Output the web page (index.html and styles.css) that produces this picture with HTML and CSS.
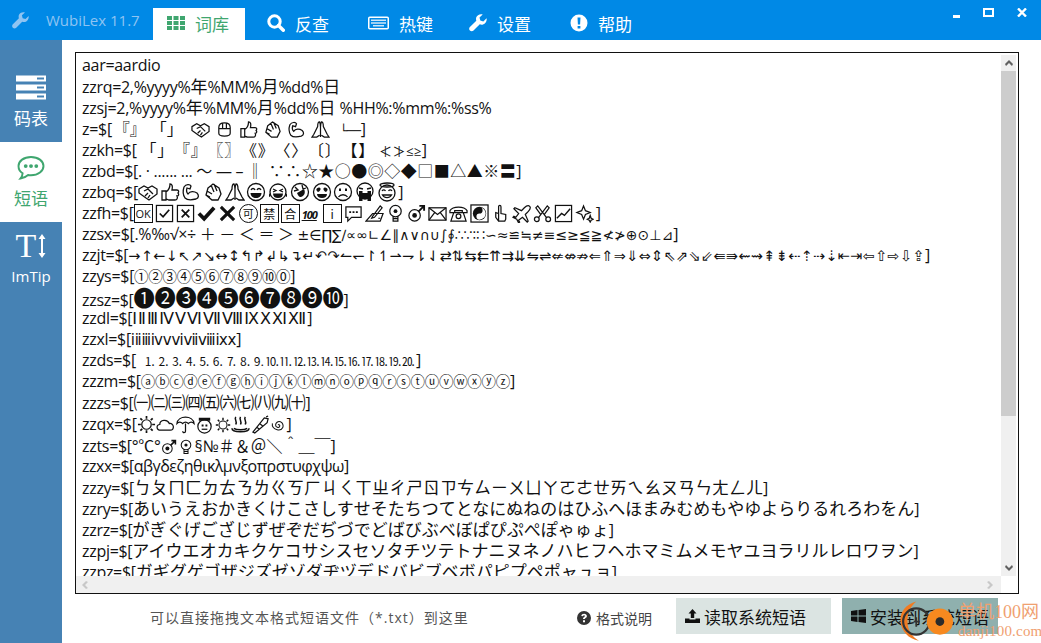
FILE: index.html
```html
<!DOCTYPE html>
<html lang="zh-CN">
<head>
    <meta charset="UTF-8">
    <meta name="viewport" content="width=device-width, initial-scale=1.0">
    <title>WubiLex 11.7</title>
    <link rel="stylesheet" href="styles.css">
</head>
<body>
    <!-- small black line icons used in the phrase list -->
    <svg class="icon-defs">
        <symbol id="i-hand" viewBox="0 0 20 20"><path d="M1 7l5-3 4 2 4-2 5 3v5l-8 6-3-2-7-5zM6 9l4-2 5 5M7 14l3-3M10 16l2-3"/></symbol>
        <symbol id="i-fist" viewBox="0 0 20 20"><path d="M4 8c0-3 2-5 6-5s6 2 6 5v6c0 2-2 3-6 3s-6-1-6-3zM4 9h12M8 3v6M12 3v6"/></symbol>
        <symbol id="i-thumb" viewBox="0 0 20 20"><path d="M2 9h4v9H2zM6 10c3-2 4-5 4-8 2 0 3 2 2 6h5c2 0 2 2 1 3 1 1 1 3-1 3 1 2 0 4-2 4H9c-1 0-2-1-3-1"/></symbol>
        <symbol id="i-clap" viewBox="0 0 20 20"><path d="M5 6l5-4 6 4 2 6-3 6H9l-6-5zM8 3l3 7M11 2l3 7M4 9l5 3M3 13l4 2"/></symbol>
        <symbol id="i-muscle" viewBox="0 0 20 20"><path d="M3 5c2-3 6-3 7-1l-1 3-3-1c-1 3 0 5 1 6 2-3 6-3 9-1 2 2 2 5-1 6-4 1-9 1-11-1C2 13 2 8 3 5z"/></symbol>
        <symbol id="i-pray" viewBox="0 0 20 20"><path d="M10 18V7c0-3-1-5-1-5-1 0-2 2-2 5l-4 8-2 3h5l3-2M10 18V7c0-3 1-5 1-5 1 0 2 2 2 5l4 8 2 3h-5l-3-2"/></symbol>
        <symbol id="i-grin" viewBox="0 0 20 20"><circle cx="10" cy="10" r="8.500"/><path d="M5 8c1-2 3-2 4 0M11 8c1-2 3-2 4 0"/><path class="solid" d="M4.500 11h11c0 3-2.500 5-5.500 5s-5.500-2-5.500-5z"/></symbol>
        <symbol id="i-joy" viewBox="0 0 20 20"><circle cx="10" cy="10" r="8"/><path d="M5 7l3 1.500L5 10M15 7l-3 1.500 3 1.500"/><path class="solid" d="M5 11.500h10c0 3-2 4.500-5 4.500s-5-1.500-5-4.500zM1 11l2 3-2 1zM19 11l-2 3 2 1z"/></symbol>
        <symbol id="i-rofl" viewBox="0 0 20 20"><circle cx="10" cy="10" r="8.500"/><path d="M5 5l3 3-4 1M12 3l1 4 3-1"/><path class="solid" d="M7 11l7-4c2 4 0 7-3 8-2 .5-3-2-4-4z"/></symbol>
        <symbol id="i-love" viewBox="0 0 20 20"><circle cx="10" cy="10" r="8.500"/><path class="solid" d="M5.500 6c1-1 2.500-.5 3 .5.500 1-1 3-2.500 3.500C4.500 9 3.500 7 5.500 6zM14.500 6c-1-1-2.500-.5-3 .5-.5 1 1 3 2.500 3.500 1.500-1 2.500-3 .5-4zM5 12h10c0 2.500-2 4-5 4s-5-1.500-5-4z"/></symbol>
        <symbol id="i-sad" viewBox="0 0 20 20"><circle cx="10" cy="10" r="8.500"/><path class="solid" d="M6 6.500h2v2.500H6zM12 6.500h2v2.500h-2z"/><path d="M5.500 15c2-3 7-3 9 0"/></symbol>
        <symbol id="i-sob" viewBox="0 0 20 20"><circle cx="10" cy="9" r="8"/><path d="M4 6l4 1M16 6l-4 1"/><path class="solid" d="M4 9h3.500v10H4zM12.500 9H16v10h-3.500zM7.500 11h5v6h-5z"/></symbol>
        <symbol id="i-angel" viewBox="0 0 20 20"><circle cx="10" cy="11" r="8"/><ellipse cx="10" cy="3" rx="7" ry="2"/><path d="M5 9c1-1.500 2.500-1.500 3.500 0M11.500 9c1-1.500 2.500-1.500 3.500 0M5.500 13c2 3.500 7 3.500 9 0z"/></symbol>
        <symbol id="i-check-box" viewBox="0 0 20 20"><rect x="1.500" y="1.500" width="17" height="17"/><path d="M5 10l3.500 3.500L15 6" stroke-width="1.800"/></symbol>
        <symbol id="i-x-box" viewBox="0 0 20 20"><rect x="1.500" y="1.500" width="17" height="17"/><path d="M6 6l8 8M14 6l-8 8" stroke-width="1.800"/></symbol>
        <symbol id="i-check" viewBox="0 0 20 20"><path d="M2 10l5.500 5.500L18 4" stroke-width="4"/></symbol>
        <symbol id="i-x" viewBox="0 0 20 20"><path d="M3 3l14 14M17 3L3 17" stroke-width="3.200"/></symbol>
        <symbol id="i-bubble" viewBox="0 0 20 20"><path d="M2 3h16v11H8l-4 4v-4H2z"/><path class="solid" d="M5.500 7.500h2v2h-2zM9 7.500h2v2H9zM12.500 7.500h2v2h-2z"/></symbol>
        <symbol id="i-memo" viewBox="0 0 20 20"><path d="M1 18l7-8h11l-3 8zM8 13L16 2l2 2-8 10-3 1zM14 15h2"/></symbol>
        <symbol id="i-bulb" viewBox="0 0 20 20"><circle cx="10" cy="7.500" r="6"/><circle class="solid" cx="10" cy="7.500" r="2"/><path d="M7.500 13v5h5v-5M7.500 15.500h5"/></symbol>
        <symbol id="i-male" viewBox="0 0 20 20"><circle cx="8" cy="12" r="6"/><circle class="solid" cx="8" cy="12" r="2.500"/><path d="M12 8l6-6M13 2h5v5" stroke-width="2"/></symbol>
        <symbol id="i-mail" viewBox="0 0 20 20"><rect x="1" y="4" width="18" height="13"/><path d="M1 4l9 7 9-7M1 17l6-8M19 17l-6-8"/></symbol>
        <symbol id="i-phone" viewBox="0 0 20 20"><path d="M1 7c3-5 15-5 18 0v2h-5V7H6v2H1zM5 9h10l3 9H2z"/><circle cx="10" cy="13" r="2.500"/></symbol>
        <symbol id="i-yin" viewBox="0 0 20 20"><rect x="1" y="1" width="18" height="18"/><circle class="solid" cx="10" cy="10" r="7"/><path class="paper" d="M10 3.500a3.200 3.200 0 0 1 0 6.500 3.200 3.200 0 0 0 0 6.500 6.500 6.500 0 0 0 0-13z"/></symbol>
        <symbol id="i-point" viewBox="0 0 20 20"><path d="M8 18V3c0-2 2.500-2 2.500 0v7l5 1v5l-1 2zM8 10L5 9v5l3 4"/></symbol>
        <symbol id="i-plane" viewBox="0 0 20 20"><path d="M18 2c-2-1-4 1-5 2L10 7 3 4 2 5l5 5-3 4-2-1-1 1 4 2 2 4 1-1-1-2 4-3 5 5 1-1-3-7 3-3c1-1 3-3 2-5z"/></symbol>
        <symbol id="i-scissors" viewBox="0 0 20 20"><circle cx="4" cy="16" r="2.500"/><circle cx="16" cy="16" r="2.500"/><path d="M6 14L15 2l2 2-5 7M14 14L5 2 3 4l5 7"/></symbol>
        <symbol id="i-chart" viewBox="0 0 20 20"><rect x="1.500" y="1.500" width="17" height="17"/><path d="M3 15l5-5 3 2 6-7" stroke-width="1.500"/></symbol>
        <symbol id="i-spark" viewBox="0 0 20 20"><path d="M9 2l2 5 5 2-5 2-2 5-2-5-5-2 5-2zM16 12l1 3 2 1-2 1-1 2-1-2-2-1 2-1z"/></symbol>
        <symbol id="i-sun" viewBox="0 0 20 20"><circle cx="10" cy="10" r="5"/><path d="M10 1v3M10 16v3M1 10h3M16 10h3M3.500 3.500l2 2M14.500 14.500l2 2M16.500 3.500l-2 2M5.500 14.500l-2 2" stroke-width="1.800"/></symbol>
        <symbol id="i-cloud" viewBox="0 0 20 20"><path d="M5 16c-5 0-5-6-1-6 0-5 8-6 10-1 5-1 6 7 1 7z"/></symbol>
        <symbol id="i-umbrella" viewBox="0 0 20 20"><path d="M1 9c1-9 17-9 18 0-2-2-4-2-6 0-2-2-4-2-6 0-2-2-4-2-6 0zM10 9v8c0 2-3 2-3 0"/></symbol>
        <symbol id="i-snow" viewBox="0 0 20 20"><circle cx="10" cy="12" r="7"/><path class="solid" d="M4 3h12v3H4zM7 10h2v2H7zM11 10h2v2h-2z"/><path d="M7 15h6"/></symbol>
        <symbol id="i-spring" viewBox="0 0 20 20"><path d="M1 14c0 5 18 5 18 0M5 2c-2 3 2 4 0 8M10 2c-2 3 2 4 0 8M15 2c-2 3 2 4 0 8M3 14c3 2 11 2 14 0" stroke-width="1.600"/></symbol>
        <symbol id="i-closed" viewBox="0 0 20 20"><path d="M2 18L14 3l4 1-1 4L4 19zM9 9l4 3M6 13l3 2M16 2l2-1"/></symbol>
        <symbol id="i-spiral" viewBox="0 0 20 20"><path d="M10 10c1-1 3 0 2 2s-5 1-5-2 3-5 6-4 4 5 3 7-3 4-7 3S2 12 3 8"/></symbol>
    </svg>

    <header class="titlebar">
        <div class="brand">
            <svg class="brand-icon" viewBox="0 0 18 18"><path d="M17.600 4.300l-3.300 3.100-3-.9-.8-3L13.700.4C11-.4 8 .9 7.200 3.500c-.3 1.100-.2 2.200.1 3.200L.9 13c-1 1-1 2.600 0 3.600s2.600 1 3.600 0l6.300-6.300c1 .4 2.100.5 3.200.2 2.600-.7 4.100-3.500 3.600-6.200z"/></svg>
            <span>WubiLex 11.7</span>
        </div>
        <nav class="tabs">
            <div class="tab active">
                <svg class="tab-icon" viewBox="0 0 18 14"><path d="M0 0h5v4H0zM6.500 0h5v4h-5zM13 0h5v4h-5zM0 5h5v4H0zM6.500 5h5v4h-5zM13 5h5v4h-5zM0 10h5v4H0zM6.500 10h5v4h-5zM13 10h5v4h-5z"/></svg>
                <span>词库</span>
            </div>
            <div class="tab">
                <svg class="tab-icon" viewBox="0 0 18 18"><circle cx="7.500" cy="7.500" r="5.700" fill="none" stroke="#fff" stroke-width="3"/><path d="M11.500 11.500l4.800 4.800" stroke="#fff" stroke-width="3.400" stroke-linecap="round"/></svg>
                <span>反查</span>
            </div>
            <div class="tab">
                <svg class="tab-icon wide" viewBox="0 0 21 13"><rect x=".75" y=".75" width="19.500" height="11.500" rx="1" fill="none" stroke="#fff" stroke-width="1.500"/><path d="M3 3h15v1.500H3zM3 5.700h15v1.500H3zM5 8.500h11V10H5z" fill="#cfe6f8"/></svg>
                <span>热键</span>
            </div>
            <div class="tab">
                <svg class="tab-icon" viewBox="0 0 18 18"><path d="M17.600 4.300l-3.300 3.100-3-.9-.8-3L13.700.4C11-.4 8 .9 7.200 3.500c-.3 1.100-.2 2.200.1 3.200L.9 13c-1 1-1 2.600 0 3.600s2.600 1 3.600 0l6.300-6.300c1 .4 2.100.5 3.200.2 2.600-.7 4.100-3.500 3.600-6.200z"/></svg>
                <span>设置</span>
            </div>
            <div class="tab">
                <svg class="tab-icon" viewBox="0 0 18 18"><path fill-rule="evenodd" d="M9 .5a8.500 8.500 0 1 0 0 17 8.500 8.500 0 0 0 0-17zM7.500 3.500h3l-.4 7H7.900zM7.600 12h2.800v2.600H7.600z"/></svg>
                <span>帮助</span>
            </div>
        </nav>
        <div class="win-buttons">
            <span class="win-min"></span>
            <span class="win-max"></span>
            <svg class="win-close" viewBox="0 0 10 9"><path d="M1 .5l8 8M9 .5l-8 8" stroke="#fff" stroke-width="2.400"/></svg>
        </div>
    </header>

    <div class="body-row">
        <aside class="sidebar">
            <div class="side-item">
                <svg class="side-icon" viewBox="0 0 30 24"><path fill-rule="evenodd" d="M0 0h30v6H0zM21 2v2h7V2zM0 9h30v6H0zM21 11v2h7v-2zM0 18h30v6H0zM21 20v2h7v-2z"/></svg>
                <span>码表</span>
            </div>
            <div class="side-item active">
                <svg class="side-icon" viewBox="0 0 30 26"><path fill="none" stroke="#3fa66f" stroke-width="2" d="M15 2c7.500 0 13 4.300 13 9.500S22.500 21 15 21c-1 0-2 0-3-.2-2 1.800-5 3.300-8 3.700 1.200-1.500 2.200-3.200 2.300-5.500C3.500 17.400 2 14.600 2 11.500 2 6.300 7.500 2 15 2z"/><circle cx="9.500" cy="11.500" r="2"/><circle cx="15" cy="11.500" r="2"/><circle cx="20.500" cy="11.500" r="2"/></svg>
                <span>短语</span>
            </div>
            <div class="side-item">
                <div class="imtip-icon">
                    <span class="imtip-t">T</span>
                    <svg viewBox="0 0 8 24"><path d="M4 0l3.500 5H5v14h2.500L4 24 .5 19H3V5H.5z"/></svg>
                </div>
                <span class="imtip-label">ImTip</span>
            </div>
        </aside>

        <main class="content">
            <div class="editor">
                <div class="editor-text">
                    <div class="line">aar=aardio</div>
                    <div class="line">zzrq=2,%yyyy%<span class="kana">年</span>%MM%<span class="kana">月</span>%dd%<span class="kana">日</span></div>
                    <div class="line">zzsj=2,%yyyy%<span class="kana">年</span>%MM%<span class="kana">月</span>%dd%<span class="kana">日</span> %HH%:%mm%:%ss%</div>
                    <div class="line">z=$[<span class="cjk quote-a">『』</span><span class="cjk quote-b">「」</span><span class="hands"><svg class="ico"><use href="#i-hand"/></svg><svg class="ico"><use href="#i-fist"/></svg><svg class="ico"><use href="#i-thumb"/></svg><svg class="ico"><use href="#i-clap"/></svg><svg class="ico"><use href="#i-muscle"/></svg><svg class="ico"><use href="#i-pray"/></svg></span><span class="corner">└──</span>]</div>
                    <div class="line">zzkh=$[ <span class="cjk pairs">「」『』〖〗《》〈〉〔〕【】</span> <span class="small">≮≯≤≥</span>]</div>
                    <div class="line">zzbd=$[. · ...... ... ～ — – ‖<span class="cjk points">∵∴☆★○●◎◇◆□■△▲※〓</span>]</div>
                    <div class="line row-bq">zzbq=$[<svg class="ico"><use href="#i-hand"/></svg><svg class="ico"><use href="#i-thumb"/></svg><svg class="ico"><use href="#i-muscle"/></svg><svg class="ico"><use href="#i-clap"/></svg><svg class="ico"><use href="#i-pray"/></svg><svg class="ico"><use href="#i-grin"/></svg><svg class="ico"><use href="#i-joy"/></svg><svg class="ico"><use href="#i-rofl"/></svg><svg class="ico"><use href="#i-love"/></svg><svg class="ico"><use href="#i-sad"/></svg><svg class="ico"><use href="#i-sob"/></svg><svg class="ico"><use href="#i-angel"/></svg>]</div>
                    <div class="line row-fh">zzfh=$[<span class="boxed ok">OK</span><svg class="ico"><use href="#i-check-box"/></svg><svg class="ico"><use href="#i-x-box"/></svg><svg class="ico"><use href="#i-check"/></svg><svg class="ico"><use href="#i-x"/></svg><span class="boxed round">可</span><span class="boxed">禁</span><span class="boxed">合</span><span class="hundred">100</span><span class="boxed">i</span><svg class="ico"><use href="#i-bubble"/></svg><svg class="ico"><use href="#i-memo"/></svg><svg class="ico"><use href="#i-bulb"/></svg><svg class="ico"><use href="#i-male"/></svg><svg class="ico"><use href="#i-mail"/></svg><svg class="ico"><use href="#i-phone"/></svg><svg class="ico"><use href="#i-yin"/></svg><svg class="ico"><use href="#i-point"/></svg><svg class="ico"><use href="#i-plane"/></svg><svg class="ico"><use href="#i-scissors"/></svg><svg class="ico"><use href="#i-chart"/></svg><svg class="ico"><use href="#i-spark"/></svg>]</div>
                    <div class="line">zzsx=$[.%‰√×÷ ＋ － ＜ ＝ ＞ <span class="math">±∈∏∑∕∝∞∟∠∥∧∨∩∪∫∮∴∵∶∷∽≈≌≒≠≡≤≥≦≧≮≯⊕⊙⊥⊿</span>]</div>
                    <div class="line">zzjt=$[<span class="arrows">→↑←↓↖↗↘↔↕↰↱↲↳↴↵↶↷↼↽↾↿⇀⇁⇂⇃⇄⇅⇆⇇⇈⇉⇊⇋⇌⇍⇎⇏⇐⇑⇒⇓⇔⇕⇖⇗⇘⇙⇚⇛⇜⇝⇞⇟⇠⇡⇢⇣⇤⇥⇦⇧⇨⇩⇪</span>]</div>
                    <div class="line">zzys=$[<span class="circled">①②③④⑤⑥⑦⑧⑨⑩⓪</span>]</div>
                    <div class="line">zzsz=$[<span class="big-num">❶❷❸❹❺❻❼❽❾❿</span>]</div>
                    <div class="line">zzdl=$[<span class="roman">ⅠⅡⅢⅣⅤⅥⅦⅧⅨⅩⅪⅫ</span>]</div>
                    <div class="line">zzxl=$[<span class="roman-sm">ⅰⅱⅲⅳⅴⅵⅶⅷⅸⅹ</span>]</div>
                    <div class="line">zzds=$[<span class="dotted">⒈⒉⒊⒋⒌⒍⒎⒏⒐⒑⒒⒓⒔⒕⒖⒗⒘⒙⒚⒛</span>]</div>
                    <div class="line">zzzm=$[<span class="circled">ⓐⓑⓒⓓⓔⓕⓖⓗⓘⓙⓚⓛⓜⓝⓞⓟⓠⓡⓢⓣⓤⓥⓦⓧⓨⓩ</span>]</div>
                    <div class="line">zzzs=$[<span class="paren">㈠㈡㈢㈣㈤㈥㈦㈧㈨㈩</span>]</div>
                    <div class="line row-qx">zzqx=$[<svg class="ico"><use href="#i-sun"/></svg><svg class="ico"><use href="#i-cloud"/></svg><svg class="ico"><use href="#i-umbrella"/></svg><svg class="ico"><use href="#i-snow"/></svg><svg class="ico sm"><use href="#i-sun"/></svg><svg class="ico"><use href="#i-spring"/></svg><svg class="ico"><use href="#i-closed"/></svg><svg class="ico sm"><use href="#i-spiral"/></svg>]</div>
                    <div class="line">zzts=$[°℃°<svg class="ico sm"><use href="#i-male"/></svg><svg class="ico sm"><use href="#i-bulb"/></svg>§№<span class="cjk fw">＃＆＠＼＾＿￣</span>]</div>
                    <div class="line tight">zzxx=$[αβγδεζηθικλμνξοπρστυφχψω]</div>
                    <div class="line">zzzy=$[<span class="kana">ㄅㄆㄇㄈㄉㄊㄋㄌㄍㄎㄏㄐㄑㄒㄓㄔㄕㄖㄗㄘㄙㄧㄨㄩㄚㄛㄜㄝㄞㄟㄠㄡㄢㄣㄤㄥㄦ</span>]</div>
                    <div class="line">zzry=$[<span class="kana">あいうえおかきくけこさしすせそたちつてとなにぬねのはひふへほまみむめもやゆよらりるれろわをん</span>]</div>
                    <div class="line">zzrz=$[<span class="kana">がぎぐげござじずぜぞだぢづでどばびぶべぼぱぴぷぺぽゃゅょ</span>]</div>
                    <div class="line">zzpj=$[<span class="kana">アイウエオカキクケコサシスセソタチツテトナニヌネノハヒフヘホマミムメモヤユヨラリルレロワヲン</span>]</div>
                    <div class="line">zzpz=$[<span class="kana">ガギグゲゴザジズゼゾダヂヅデドバビブベボパピプペポャュョ</span>]</div>
                </div>
                <div class="vscroll">
                    <div class="arrow-btn"><svg viewBox="0 0 8 6"><path d="M4 0l4 4-1 2-3-3-3 3-1-2z"/></svg></div>
                    <div class="vthumb"></div>
                    <div class="arrow-btn bottom"><svg viewBox="0 0 8 6"><path d="M4 6L0 2l1-2 3 3 3-3 1 2z"/></svg></div>
                </div>
                <div class="hscroll">
                    <svg class="harrow" viewBox="0 0 6 8"><path d="M0 4l4-4 2 1-3 3 3 3-2 1z"/></svg>
                    <svg class="harrow" viewBox="0 0 6 8"><path d="M6 4L2 0 0 1l3 3-3 3 2 1z"/></svg>
                </div>
            </div>

            <footer class="bottom-bar">
                <div class="hint">可以直接拖拽文本格式短语文件（*.txt）到这里</div>
                <div class="help-link">
                    <svg viewBox="0 0 14 14"><path fill-rule="evenodd" d="M7 0a7 7 0 1 0 0 14A7 7 0 0 0 7 0zM4.300 5C4.500 3.500 5.600 2.700 7.100 2.700c1.600 0 2.800 1 2.800 2.300 0 1.100-.6 1.600-1.300 2.100-.5.300-.7.500-.7 1H6c0-1.200.4-1.700 1.100-2.200.5-.3.800-.5.800-.9s-.4-.7-.9-.7-.9.300-1 .9zM6 9.200h2v2H6z"/></svg>
                    <span>格式说明</span>
                </div>
                <div class="action-btn light">
                    <svg viewBox="0 0 15 14"><path d="M7.500 0l4 4.500H9.200V9H5.800V4.500H3.500zM0 9.500h4.500v1h6v-1H15V14H0z"/></svg>
                    <span>读取系统短语</span>
                </div>
                <div class="action-btn dark">
                    <svg viewBox="0 0 15 14"><path d="M0 2l6.500-1v5.500H0zM7.500.9L15 0v6.500H7.500zM0 7.500h6.500V13L0 12zM7.500 7.500H15V14l-7.500-1z"/></svg>
                    <span>安装到系统短语</span>
                </div>
            </footer>
        </main>
    </div>

    <!-- watermark sits over the bottom right button -->
    <div class="watermark">
        <svg class="wm-logo" viewBox="0 0 80 48"><path d="M22 1C10 4 3 13 4 24c1 11 9 20 21 22-8-5-13-12-13-22S15 7 22 1z" fill="#f07b21"/><circle cx="22" cy="24" r="15" fill="none" stroke="#333" stroke-width="2.500"/><path d="M19 24h7M22 19v11" stroke="#333" stroke-width="2"/><circle cx="49" cy="24" r="15" fill="#f7891f"/><circle cx="49" cy="24" r="5" fill="#2b2b2b"/></svg>
        <div class="wm-text">
            <span class="wm-cn">单机100网</span>
            <span class="wm-url">danji100.com</span>
        </div>
    </div>
</body>
</html>
```

FILE: styles.css
```css
* {
    box-sizing: border-box;
}
html, body {
    height: 100%;
}
body {
    margin: 0;
    overflow: hidden;
    display: flex;
    flex-direction: column;
    background-color: white;
    font-family: "Open Sans", "Noto Sans CJK SC", sans-serif;
    color: #111;
}
.icon-defs {
    position: absolute;
    width: 0;
    height: 0;
}
.titlebar {
    height: 40px;
    flex: none;
    display: flex;
    align-items: flex-end;
    background-color: #0089e6;
    color: white;
}
.brand {
    width: 153px;
    height: 40px;
    padding-left: 12px;
    display: flex;
    align-items: center;
    gap: 17px;
    color: #8fc4f2;
    font-size: 15px;
}
.brand-icon {
    width: 17px;
    height: 17px;
    fill: #8fc4f2;
}
.tabs {
    display: flex;
}
.tab {
    width: 101px;
    height: 32px;
    display: flex;
    align-items: center;
    padding: 0 0 2px 22px;
    gap: 10px;
    font-size: 17px;
    fill: white;
}
.tab.active {
    width: 92px;
    padding-left: 14px;
    background-color: white;
    color: #3fa66f;
    fill: #3fa66f;
}
.tab-icon {
    width: 18px;
    height: 18px;
    flex: none;
}
.tab-icon.wide {
    width: 21px;
}
.win-buttons {
    margin-left: auto;
    height: 40px;
    padding: 8px 14px 0 0;
    display: flex;
    align-items: flex-start;
    gap: 23px;
}
.win-min {
    width: 7px;
    height: 3px;
    margin-top: 7px;
    background-color: white;
}
.win-max {
    width: 11px;
    height: 9px;
    border: 2px solid white;
}
.win-close {
    width: 10px;
    height: 9px;
}
.body-row {
    flex: 1;
    display: flex;
    min-height: 0;
}
.sidebar {
    width: 62px;
    flex: none;
    padding-top: 22px;
    background-color: #4682b4;
    color: white;
    fill: white;
}
.side-item {
    height: 80px;
    display: flex;
    flex-direction: column;
    align-items: center;
    padding-top: 13px;
    gap: 5px;
    font-size: 17px;
}
.side-item.active {
    background-color: white;
    color: #3fa66f;
    fill: #3fa66f;
}
.side-icon {
    width: 30px;
    height: 25px;
}
.imtip-icon {
    height: 32px;
    display: flex;
    align-items: center;
    gap: 2px;
    margin-top: -5px;
}
.imtip-t {
    font-family: "Liberation Serif", serif;
    font-size: 34px;
    line-height: 32px;
}
.imtip-icon svg {
    width: 8px;
    height: 24px;
}
.imtip-label {
    font-size: 15px;
    margin-top: -1px;
}
.content {
    flex: 1;
    display: flex;
    flex-direction: column;
    padding: 12px 22px 0 13px;
    min-width: 0;
}
.editor {
    height: 542px;
    flex: none;
    display: grid;
    grid-template-columns: 1fr 15px;
    grid-template-rows: 1fr 17px;
    border: 1px solid #111;
    padding-right: 2px;
    min-width: 0;
}
.editor-text {
    overflow: hidden;
    padding: 2px 0 0 6px;
    white-space: nowrap;
    font-size: 16px;
    letter-spacing: -0.3px;
    line-height: 21.1px;
    min-width: 0;
}
.line {
    height: 21.1px;
}
.tight {
    letter-spacing: -0.5px;
}
.kana {
    letter-spacing: 0;
    font-size: 17px;
}
/* symbol runs, sized per run so each row ends where it should */
.cjk {
    font-family: "Noto Sans CJK SC", sans-serif;
    letter-spacing: 0.5px;
    text-spacing-trim: space-all;
}
.quote-a {
    letter-spacing: 0;
    margin-left: 2px;
}
.quote-b {
    letter-spacing: 0;
    margin-left: 5px;
}
.hands {
    display: inline-flex;
    gap: 5px;
    margin-left: 8px;
    vertical-align: -4px;
}
.hands .ico {
    margin: 0;
    vertical-align: top;
}
.corner {
    font-family: "DejaVu Sans", sans-serif;
    font-size: 12px;
    margin-left: 10px;
}
.pairs {
    letter-spacing: 0.75px;
}
.points {
    margin-left: 6px;
}
.fw {
    letter-spacing: 0;
}
.small {
    font-size: 13px;
    letter-spacing: 0.5px;
}
.math {
    font-size: 14px;
    letter-spacing: 0;
    font-family: "DejaVu Sans", sans-serif;
}
.arrows {
    font-size: 14.500px;
    letter-spacing: 0.3px;
    font-family: "DejaVu Sans", sans-serif;
}
.circled {
    font-size: 14.500px;
}
.big-num {
    font-size: 21.300px;
    line-height: 1;
}
.roman {
    font-family: "DejaVu Sans", sans-serif;
    font-size: 16px;
    letter-spacing: 1.100px;
}
.roman-sm {
    font-family: "DejaVu Sans", sans-serif;
    font-size: 15px;
    letter-spacing: -0.2px;
}
.dotted {
    font-size: 12px;
    letter-spacing: 1.600px;
    margin-left: 8px;
}
.paren {
    font-family: "Noto Sans CJK SC", sans-serif;
    font-size: 17.500px;
    line-height: 1;
}
.ico {
    width: 19px;
    height: 19px;
    margin-right: 1px;
    vertical-align: -4px;
    fill: none;
    stroke: #111;
    stroke-width: 1.300;
}
.ico.sm {
    width: 16px;
    height: 16px;
    vertical-align: -3px;
}
.row-bq .ico {
    width: 20px;
    height: 20px;
    margin-right: 1.700px;
}
.row-fh .ico, .row-fh .boxed {
    margin-right: 2px;
}
.row-qx .ico {
    margin-right: 0.500px;
}
.ico .solid, symbol .solid {
    fill: #111;
    stroke: none;
}
symbol .paper {
    fill: white;
    stroke: none;
}
/* overflow hidden puts the box baseline on its bottom edge, same as the svg icons */
.boxed {
    display: inline-block;
    width: 19px;
    height: 19px;
    margin-right: 1px;
    border: 1px solid #111;
    overflow: hidden;
    vertical-align: -4px;
    text-align: center;
    font-family: "Noto Sans CJK SC", sans-serif;
    font-size: 12px;
    line-height: 17px;
    letter-spacing: 0;
}
.boxed.ok {
    font-family: "Open Sans", sans-serif;
    font-size: 11px;
}
.boxed.round {
    border-radius: 50%;
    font-size: 11px;
}
.hundred {
    display: inline-block;
    width: 21px;
    font-size: 11px;
    font-weight: 700;
    font-style: italic;
    letter-spacing: -1px;
    text-decoration: underline;
}
.vscroll {
    grid-row: 1 / 3;
    grid-column: 2;
    display: flex;
    flex-direction: column;
    margin-top: 2px;
    margin-bottom: 17px;
    background-color: #f0f0f0;
}
.arrow-btn {
    height: 16px;
    flex: none;
    display: flex;
    align-items: center;
    justify-content: center;
    fill: #606060;
}
.arrow-btn svg {
    width: 8px;
    height: 6px;
}
.arrow-btn.bottom {
    margin-top: auto;
}
.vthumb {
    height: 345px;
    background-color: #cdcdcd;
}
.hscroll {
    grid-row: 2;
    grid-column: 1;
    display: flex;
    align-items: center;
    justify-content: space-between;
    padding: 0 8px 0 6px;
    background-color: #f0f0f0;
    fill: #c8c8c8;
}
.harrow {
    width: 6px;
    height: 8px;
}
.bottom-bar {
    flex: 1;
    display: flex;
    align-items: flex-start;
    padding-top: 4px;
}
.hint {
    width: 440px;
    margin-top: 9px;
    padding-left: 75px;
    font-size: 14px;
    letter-spacing: 1px;
    color: #555;
    white-space: nowrap;
}
.help-link {
    width: 161px;
    margin-top: 10px;
    padding-left: 62px;
    display: flex;
    align-items: center;
    gap: 5px;
    font-size: 14px;
    color: #444;
    fill: #333;
}
.help-link svg {
    width: 14px;
    height: 14px;
    flex: none;
}
.action-btn {
    height: 36px;
    display: flex;
    align-items: center;
    gap: 4px;
    padding-left: 9px;
    font-size: 17px;
    fill: #111;
    white-space: nowrap;
}
.action-btn svg {
    width: 15px;
    height: 14px;
    flex: none;
}
.action-btn.light {
    width: 155px;
    background-color: #dbe4e2;
    margin-right: 11px;
}
.action-btn.dark {
    width: 156px;
    background-color: #8fb0ae;
}
.watermark {
    position: absolute;
    left: 897px;
    top: 600px;
    display: flex;
    align-items: center;
}
.wm-logo {
    width: 70px;
    height: 43px;
    margin-right: -9px;
}
.wm-text {
    display: flex;
    flex-direction: column;
    color: #f0a070;
    line-height: 19px;
}
.wm-cn {
    font-family: "Liberation Serif", "Noto Sans CJK SC", serif;
    font-size: 18px;
    white-space: nowrap;
}
.wm-url {
    font-family: "Liberation Serif", serif;
    font-size: 15px;
    letter-spacing: 0.2px;
    white-space: nowrap;
}
```
